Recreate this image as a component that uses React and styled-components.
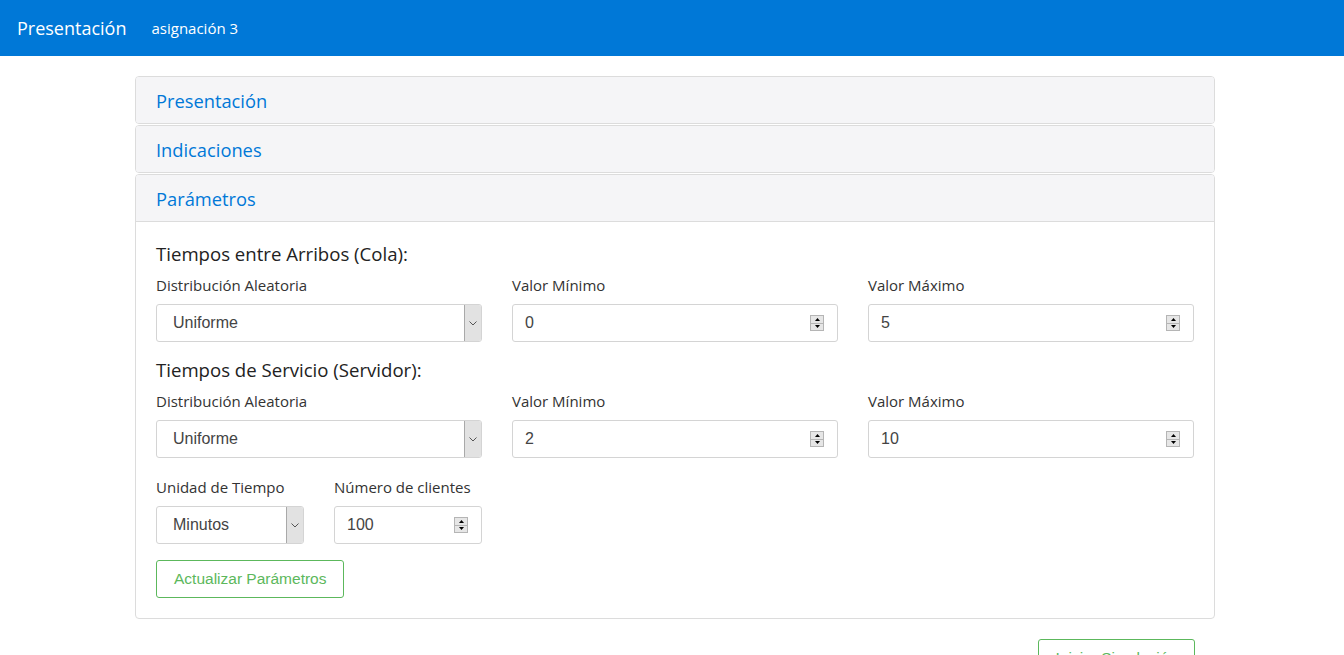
import React from "react";
import styled, { createGlobalStyle } from "styled-components";

const GlobalStyle = createGlobalStyle`
  *, *::before, *::after {
    box-sizing: border-box;
  }
  body {
    margin: 0;
    background: #fff;
    font-family: "Open Sans", "Noto Sans", sans-serif;
    color: #333;
  }
`;

const Navbar = styled.nav`
  height: 56px;
  background: #0078d7;
  display: flex;
  align-items: center;
  padding: 0 17px;
  color: #fff;
`;

const Brand = styled.span`
  font-size: 18px;
  margin-right: 25px;
`;

const NavLink = styled.span`
  font-size: 15px;
`;

const Container = styled.main`
  width: 1080px;
  margin: 20px 0 0 135px;
`;

const Card = styled.section`
  border: 1px solid #dcdcdc;
  border-radius: 4px;
  margin-bottom: 1px;
  overflow: hidden;
`;

const CardHeader = styled.div`
  height: ${(p) => (p.$open ? "47px" : "46px")};
  background: #f5f5f7;
  display: flex;
  align-items: center;
  padding: 0 20px;
  color: #0078d7;
  font-size: 18.3px;
  border-bottom: ${(p) => (p.$open ? "1px solid #dcdcdc" : "none")};
`;

const CardBody = styled.div`
  padding: 20px 20px 20px;
`;

const SectionTitle = styled.h3`
  margin: 0 0 9px;
  font-size: 18.6px;
  font-weight: 400;
  color: #222;
  line-height: 24px;
`;

const Row = styled.div`
  display: grid;
  grid-template-columns: ${(p) => p.$cols || "repeat(3, 326px)"};
  column-gap: 30px;
  margin-top: ${(p) => p.$mt || "0"};
  margin-bottom: 16px;
`;

const Field = styled.div`
  display: flex;
  flex-direction: column;
`;

const Label = styled.label`
  font-size: 15px;
  color: #333;
  line-height: 20px;
  margin-bottom: 9px;
`;

const InputBox = styled.div`
  position: relative;
  height: 38px;
  border: 1px solid #d4d4d4;
  border-radius: 3px;
  background: #fff;
  display: flex;
  align-items: center;
  padding-left: ${(p) => (p.$select ? "16px" : "12px")};
  font-family: "Liberation Sans", Arial, sans-serif;
  font-size: 16px;
  color: #444;
`;

const SelectArrow = styled.span`
  position: absolute;
  right: 0;
  top: 0;
  bottom: 0;
  width: 17px;
  background: #e2e2e2;
  border-left: 1px solid #a9a9a9;
  border-radius: 0 2px 2px 0;
  display: flex;
  align-items: center;
  justify-content: center;
`;

const Spinner = styled.span`
  position: absolute;
  right: 13px;
  top: 10px;
  width: 14px;
  height: 16px;
  display: flex;
  flex-direction: column;
  background: #e6e6e6;
  border: 1px solid #b5b5b5;
`;

const SpinHalf = styled.span`
  flex: 1;
  display: flex;
  align-items: center;
  justify-content: center;
  border-top: ${(p) => (p.$bottom ? "1px solid #b5b5b5" : "none")};
`;

const OutlineButton = styled.button`
  height: 38px;
  padding: 0 17px;
  border: 1px solid #5cb85c;
  border-radius: 3px;
  background: #fff;
  color: #5cb85c;
  font-family: "Liberation Sans", Arial, sans-serif;
  font-size: 15.5px;
`;

const Footer = styled.div`
  display: flex;
  justify-content: flex-end;
  padding: 19px 20px 0;
`;

const Select = ({ value }) => (
  <InputBox $select>
    {value}
    <SelectArrow>
      <svg width="8" height="5" viewBox="0 0 8 5">
        <path d="M0.5 0.5 L4 4 L7.5 0.5" fill="none" stroke="#555" strokeWidth="1" />
      </svg>
    </SelectArrow>
  </InputBox>
);

const NumberInput = ({ value }) => (
  <InputBox>
    {value}
    <Spinner>
      <SpinHalf>
        <svg width="5" height="3" viewBox="0 0 5 3">
          <path d="M0 3 L2.5 0 L5 3 Z" fill="#000" />
        </svg>
      </SpinHalf>
      <SpinHalf $bottom>
        <svg width="5" height="3" viewBox="0 0 5 3">
          <path d="M0 0 L2.5 3 L5 0 Z" fill="#000" />
        </svg>
      </SpinHalf>
    </Spinner>
  </InputBox>
);

const DistributionRow = ({ min, max }) => (
  <Row>
    <Field>
      <Label>Distribución Aleatoria</Label>
      <Select value="Uniforme" />
    </Field>
    <Field>
      <Label>Valor Mínimo</Label>
      <NumberInput value={min} />
    </Field>
    <Field>
      <Label>Valor Máximo</Label>
      <NumberInput value={max} />
    </Field>
  </Row>
);

export default function App() {
  return (
    <>
      <GlobalStyle />
      <Navbar>
        <Brand>Presentación</Brand>
        <NavLink>asignación 3</NavLink>
      </Navbar>
      <Container>
        <Card>
          <CardHeader>Presentación</CardHeader>
        </Card>
        <Card>
          <CardHeader>Indicaciones</CardHeader>
        </Card>
        <Card>
          <CardHeader $open>Parámetros</CardHeader>
          <CardBody>
            <SectionTitle>Tiempos entre Arribos (Cola):</SectionTitle>
            <DistributionRow min="0" max="5" />
            <SectionTitle>Tiempos de Servicio (Servidor):</SectionTitle>
            <DistributionRow min="2" max="10" />
            <Row $cols="148px 148px" $mt="19px">
              <Field>
                <Label>Unidad de Tiempo</Label>
                <Select value="Minutos" />
              </Field>
              <Field>
                <Label>Número de clientes</Label>
                <NumberInput value="100" />
              </Field>
            </Row>
            <OutlineButton>Actualizar Parámetros</OutlineButton>
          </CardBody>
        </Card>
        <Footer>
          <OutlineButton>Iniciar Simulación</OutlineButton>
        </Footer>
      </Container>
    </>
  );
}
